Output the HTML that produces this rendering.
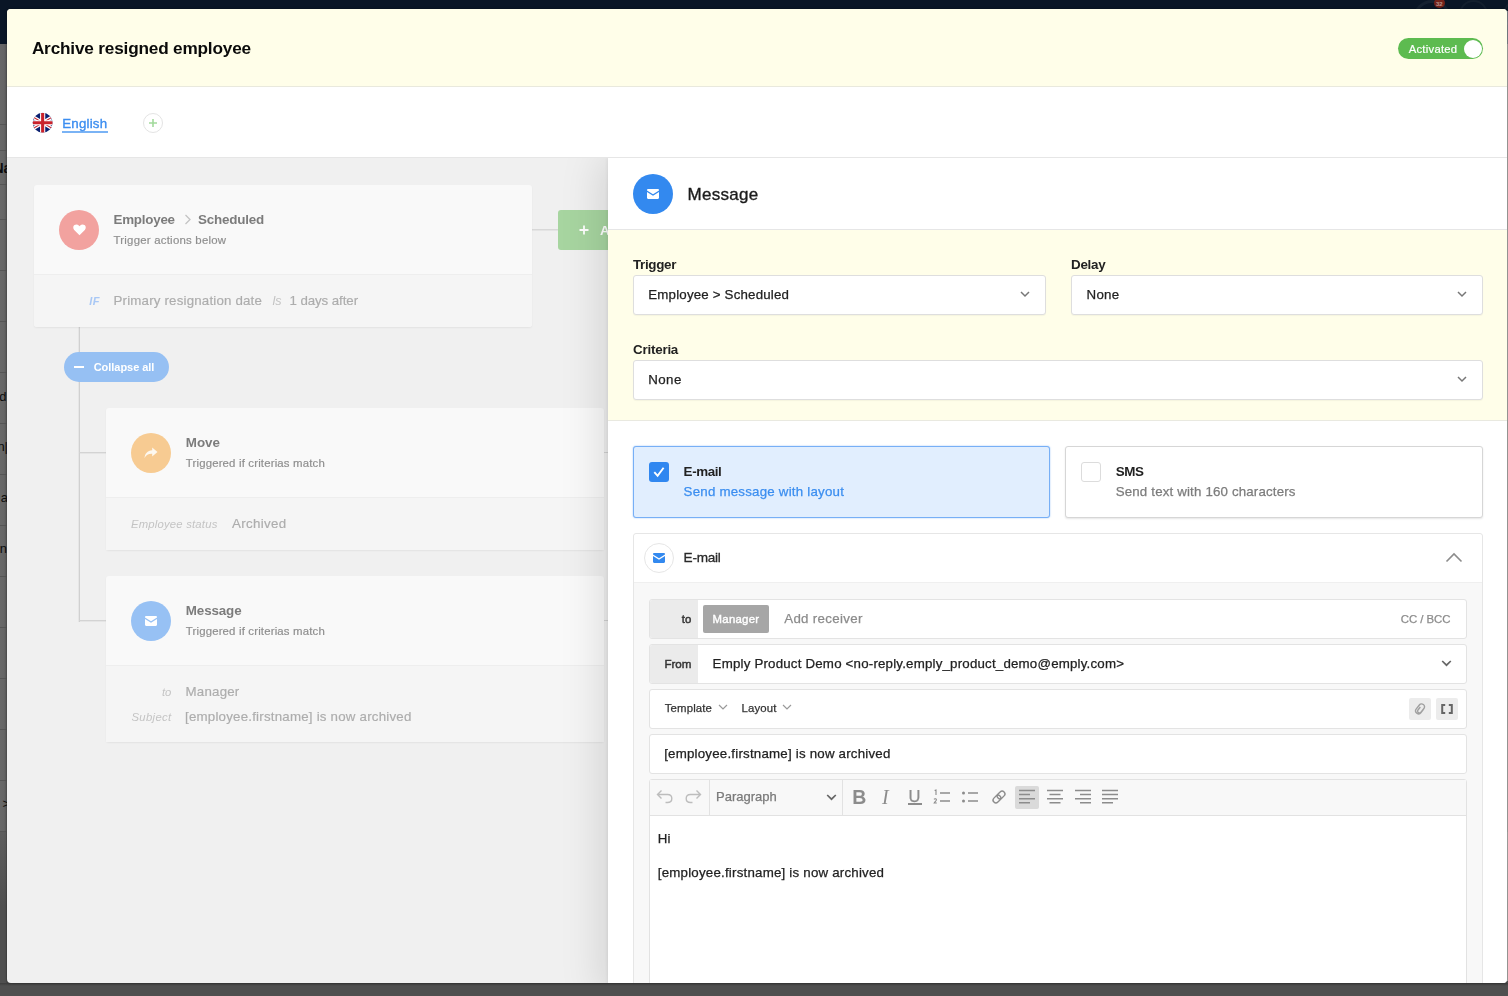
<!DOCTYPE html>
<html lang="en"><head><meta charset="utf-8"><title>Archive resigned employee</title>
<style>
html,body{margin:0;padding:0}
body{width:1508px;height:996px;overflow:hidden;position:relative;background:#4f4f4f;font-family:"Liberation Sans",sans-serif}
.a{position:absolute}
.ln{left:0;width:8px;height:1px;background:#555}
.sg{font-size:13px;line-height:16px;color:#0c0c0c;white-space:pre}
.card{background:#f9f9f9;border-radius:3px;box-shadow:0 1px 2px rgba(0,0,0,.06)}
.sel{background:#fff;border:1px solid #dedede;border-radius:3px;box-sizing:border-box;box-shadow:0 1px 1px rgba(0,0,0,.04)}
.row{background:#fff;border:1px solid #e3e3e3;border-radius:3px;box-sizing:border-box}
.t{position:absolute;white-space:pre;line-height:20px;height:20px}
</style></head><body>
<!-- backdrop -->
<div class="a" style="left:0;top:0;width:1508px;height:44px;background:#0a1626"></div>
<div class="a" style="left:0;top:44px;width:12px;height:952px;background:linear-gradient(90deg,#686868 0,#646464 5px,#545454 7px)"></div>
<div class="a" style="left:0;top:832px;width:1508px;height:164px;background:linear-gradient(180deg,#5d5d5d 0,#4f4f4f 75px)"></div>
<div class="a" style="left:6px;top:832px;width:2px;height:151px;background:linear-gradient(90deg,rgba(0,0,0,.05),rgba(0,0,0,.2))"></div>
<div class="a" style="left:0;top:983px;width:1508px;height:3px;background:linear-gradient(180deg,#3c3c3c,#4f4f4f)"></div>
<div class="a ln" style="top:124px"></div><div class="a ln" style="top:150px"></div><div class="a ln" style="top:184px"></div>
<div class="a ln" style="top:219px"></div><div class="a ln" style="top:270px"></div><div class="a ln" style="top:321px"></div>
<div class="a ln" style="top:372px"></div><div class="a ln" style="top:423px"></div><div class="a ln" style="top:474px"></div>
<div class="a ln" style="top:525px"></div><div class="a ln" style="top:576px"></div><div class="a ln" style="top:627px"></div>
<div class="a ln" style="top:678px"></div><div class="a ln" style="top:729px"></div><div class="a ln" style="top:780px"></div><div class="a ln" style="top:831px"></div>
<!-- faint nav circles -->
<div class="a" style="left:1413px;top:0;width:38px;height:38px;border-radius:50%;border:3px solid #152130;box-sizing:border-box"></div>
<div class="a" style="left:1458.5px;top:0;width:29px;height:29px;border-radius:50%;border:2px solid #131f2d;box-sizing:border-box"></div>
<div class="a" style="left:1503px;top:0;width:29px;height:29px;border-radius:50%;border:2px solid #131f2d;box-sizing:border-box"></div>
<div class="a" style="left:1434px;top:-2.5px;width:10.5px;height:10.5px;border-radius:50%;background:#74231a"></div>
<span class="a" style="left:1436px;top:0.5px;font-size:6px;line-height:7px;color:#b9958f;font-weight:bold">32</span>
<!-- page fragments at left edge -->
<span class="a sg" style="left:-6.5px;top:160px;font-weight:bold;font-size:14px">Name</span>
<span class="a sg" style="right:1501.5px;top:389px">d</span>
<span class="a sg" style="right:1500px;top:439px">n|</span>
<span class="a sg" style="right:1500px;top:490px">a</span>
<span class="a sg" style="right:1501px;top:541px">n</span>
<span class="a sg" style="right:1498px;top:796px">&gt;</span>

<!-- modal -->
<div class="a" id="modal" style="will-change:transform;left:7px;top:9px;width:1500px;height:974px;border-radius:4px;overflow:hidden;background:#f0f0f0;box-shadow:0 0 3px rgba(0,0,0,.32)">
<div class="a" style="left:-7px;top:-9px;width:1508px;height:996px">

<!-- header -->
<div class="a" style="left:7px;top:9px;width:1500px;height:78px;background:#fffee9;border-bottom:1px solid #e9e9dd;box-sizing:border-box"></div>
<div class="a" style="left:1398px;top:38px;width:85px;height:21px;border-radius:11px;background:#5dbb50"></div>
<div class="a" style="left:1463.5px;top:39.5px;width:18px;height:18px;border-radius:50%;background:#fff"></div>

<!-- lang bar -->
<div class="a" style="left:7px;top:87px;width:1500px;height:71px;background:#fff;border-bottom:1px solid #e6e6e6;box-sizing:border-box"></div>
<svg class="a" style="left:33px;top:113px;overflow:visible" width="20" height="20" viewBox="7.020 0.250 20 20">
 <defs><clipPath id="fc"><circle cx="16.670" cy="10" r="9.900"/></clipPath></defs>
 <g clip-path="url(#fc)">
  <rect x="0" y="0" width="34" height="20" fill="#0b2070"/>
  <path d="M0 0L33.340 20M33.340 0L0 20" stroke="#fff" stroke-width="3.600"/>
  <path d="M0 0L33.340 20M33.340 0L0 20" stroke="#c9222b" stroke-width="1.100"/>
  <path d="M16.670 0V20M0 10H34" stroke="#fff" stroke-width="5.200"/>
  <path d="M16.670 0V20" stroke="#c9222b" stroke-width="3.100"/>
  <path d="M0 10H34" stroke="#c9222b" stroke-width="2.800"/>
 </g>
</svg>
<div class="a" style="left:62px;top:131px;width:46px;height:2px;background:#7ab3f5"></div>
<div class="a" style="left:142.5px;top:112.8px;width:20px;height:20px;border-radius:50%;border:1px solid #e4e4e4;box-sizing:border-box;background:#fff"></div>
<svg class="a" style="left:147.5px;top:117.8px" width="10" height="10" viewBox="0 0 10 10"><path d="M5 1V9M1 5H9" stroke="#a2da9c" stroke-width="1.6"/></svg>

<!-- left flow (faded) -->
<div class="a" style="left:78px;top:327px;width:1px;height:295px;background:#e6e6e6"></div>
<div class="a" style="left:79px;top:327px;width:1px;height:295px;background:#d0d0d0"></div>
<div class="a" style="left:79px;top:452px;width:27px;height:1px;background:#d3d3d3"></div>
<div class="a" style="left:80px;top:453px;width:26px;height:1px;background:#e5e5e5"></div>
<div class="a" style="left:79px;top:620px;width:27px;height:1px;background:#d3d3d3"></div>
<div class="a" style="left:80px;top:621px;width:26px;height:1px;background:#e5e5e5"></div>
<div class="a" style="left:532px;top:229px;width:30px;height:1px;background:#d8d8d8"></div>
<div class="a" style="left:532px;top:230px;width:30px;height:1px;background:#e4e4e4"></div>

<!-- trigger card -->
<div class="a card" style="left:34px;top:185px;width:498px;height:142px"></div>
<div class="a" style="left:34px;top:274px;width:498px;height:53px;background:#f5f5f5;border-top:1px solid #eeeeee;box-sizing:border-box;border-radius:0 0 3px 3px"></div>
<div class="a" style="left:59px;top:209.5px;width:40px;height:40px;border-radius:50%;background:#f2a29f"></div>
<svg class="a" style="left:72.5px;top:223.5px" width="13" height="12" viewBox="0 0 13 12"><path d="M6.5 11.2L1.2 5.9C-0.2 4.4 0 2.1 1.5 1 2.9 0 4.7 0.3 5.8 1.5L6.5 2.2 7.2 1.5C8.3 0.3 10.1 0 11.5 1 13 2.1 13.2 4.4 11.8 5.9Z" fill="#fff"/></svg>
<svg class="a" style="left:184px;top:214px" width="8" height="11" viewBox="0 0 8 11"><path d="M1.5 1L6 5.5 1.5 10" fill="none" stroke="#c4c4c4" stroke-width="1.3"/></svg>

<!-- add button -->
<div class="a" style="left:558px;top:210px;width:110px;height:40px;border-radius:3px;background:#a7d5a0"></div>
<svg class="a" style="left:578.5px;top:224.5px" width="10" height="10" viewBox="0 0 10 10"><path d="M5 0.5V9.5M0.5 5H9.5" stroke="#fff" stroke-width="1.8"/></svg>

<div class="a" style="left:604px;top:452px;width:6px;height:1px;background:#d2d2d2"></div>
<div class="a" style="left:604px;top:620px;width:6px;height:1px;background:#d2d2d2"></div>
<!-- collapse -->
<div class="a" style="left:64px;top:352px;width:105px;height:30px;border-radius:15px;background:#96c0f3"></div>
<div class="a" style="left:74px;top:366px;width:10px;height:2px;background:#fff"></div>

<!-- move card -->
<div class="a card" style="left:106px;top:408px;width:498px;height:142px"></div>
<div class="a" style="left:106px;top:497px;width:498px;height:53px;background:#f5f5f5;border-top:1px solid #eeeeee;box-sizing:border-box"></div>
<div class="a" style="left:131px;top:433px;width:40px;height:40px;border-radius:50%;background:#f7cb92"></div>
<svg class="a" style="left:144px;top:447px" width="14" height="12" viewBox="0 0 14 12"><path d="M8.2 0.5L13.5 5 8.2 9.5V6.8C4.6 6.6 2.3 7.8 0.6 11 0.8 6.6 3.4 3.6 8.2 3.2Z" fill="#fdf8ef"/></svg>

<!-- message card -->
<div class="a card" style="left:106px;top:576px;width:498px;height:166px"></div>
<div class="a" style="left:106px;top:665px;width:498px;height:77px;background:#f5f5f5;border-top:1px solid #eeeeee;box-sizing:border-box"></div>
<div class="a" style="left:131px;top:601px;width:40px;height:40px;border-radius:50%;background:#97c1f4"></div>
<svg class="a" style="left:145px;top:616px" width="12" height="10" viewBox="0 0 12 10"><path d="M1.2 0H10.8C11.5 0 12 0.5 12 1.2V1.6L6 5.2 0 1.6V1.2C0 0.5 0.5 0 1.2 0ZM0 3.1L6 6.7 12 3.1V8.8C12 9.5 11.5 10 10.8 10H1.2C0.5 10 0 9.5 0 8.8Z" fill="#fff"/></svg>

<!-- left texts -->
<span class="t" style="left:31.90px;top:38.01px;font-size:17.2px;color:#0a0a0a;font-weight:bold;letter-spacing:-0.181px">Archive resigned employee</span>
<span class="t" style="left:1408.70px;top:39.01px;font-size:11.3px;color:#fff;-webkit-text-stroke:0.18px #fff;letter-spacing:0.248px">Activated</span>
<span class="t" style="left:62.30px;top:113.61px;font-size:13.3px;color:#3b8df0;-webkit-text-stroke:0.35px #3b8df0;letter-spacing:0.196px">English</span>
<span class="t" style="left:113.50px;top:210.00px;font-size:13.4px;color:#7c7c7c;font-weight:bold;letter-spacing:-0.246px">Employee</span>
<span class="t" style="left:198.00px;top:210.00px;font-size:13.4px;color:#7c7c7c;font-weight:bold;letter-spacing:-0.191px">Scheduled</span>
<span class="t" style="left:113.50px;top:230.00px;font-size:11.4px;color:#8e8e8e;-webkit-text-stroke:0.18px #8e8e8e;letter-spacing:0.236px">Trigger actions below</span>
<span class="t" style="left:89.20px;top:290.50px;font-size:11px;color:#a9c8f5;font-weight:bold;font-style:italic;letter-spacing:0.509px">IF</span>
<span class="t" style="left:113.50px;top:291.02px;font-size:13.3px;color:#adadad;-webkit-text-stroke:0.18px #adadad;letter-spacing:0.186px">Primary resignation date</span>
<span class="t" style="left:272.20px;top:291.01px;font-size:12.5px;color:#c4c4c4;font-style:italic;letter-spacing:-0.367px">Is</span>
<span class="t" style="left:289.50px;top:291.02px;font-size:13.3px;color:#adadad;-webkit-text-stroke:0.18px #adadad;letter-spacing:-0.082px">1 days after</span>
<span class="t" style="left:600.00px;top:221.00px;font-size:13.4px;color:#fff;font-weight:bold;letter-spacing:0.081px">Add action</span>
<span class="t" style="left:93.70px;top:357.41px;font-size:11px;color:#fff;font-weight:bold;letter-spacing:-0.037px">Collapse all</span>
<span class="t" style="left:185.80px;top:433.41px;font-size:13.4px;color:#7c7c7c;font-weight:bold;letter-spacing:-0.009px">Move</span>
<span class="t" style="left:185.80px;top:453.31px;font-size:11.4px;color:#8e8e8e;-webkit-text-stroke:0.18px #8e8e8e;letter-spacing:0.167px">Triggered if criterias match</span>
<span class="t" style="left:131.00px;top:513.51px;font-size:11.3px;color:#c4c4c4;font-style:italic;letter-spacing:0.199px">Employee status</span>
<span class="t" style="left:232.00px;top:514.02px;font-size:13.3px;color:#adadad;-webkit-text-stroke:0.18px #adadad;letter-spacing:0.346px">Archived</span>
<span class="t" style="left:185.80px;top:601.41px;font-size:13.4px;color:#7c7c7c;font-weight:bold;letter-spacing:-0.125px">Message</span>
<span class="t" style="left:185.80px;top:621.00px;font-size:11.4px;color:#8e8e8e;-webkit-text-stroke:0.18px #8e8e8e;letter-spacing:0.167px">Triggered if criterias match</span>
<span class="t" style="right:1336.70px;top:682.01px;font-size:11.3px;color:#c4c4c4;font-style:italic">to</span>
<span class="t" style="left:185.50px;top:682.02px;font-size:13.3px;color:#adadad;-webkit-text-stroke:0.18px #adadad;letter-spacing:0.217px">Manager</span>
<span class="t" style="left:131.50px;top:707.01px;font-size:11.3px;color:#c4c4c4;font-style:italic;letter-spacing:0.330px">Subject</span>
<span class="t" style="left:185.00px;top:707.02px;font-size:13.3px;color:#adadad;-webkit-text-stroke:0.18px #adadad;letter-spacing:0.215px">[employee.firstname] is now archived</span>
<!-- right panel -->
<div class="a" style="left:0;top:158px;width:1508px;height:838px;overflow:hidden"><div class="a" style="left:608px;top:0;width:900px;height:838px;background:#fff;box-shadow:-6px 0 40px rgba(0,0,0,.13),-1px 0 3px rgba(0,0,0,.06)"></div></div>
<div class="a" style="left:608px;top:229px;width:900px;height:1px;background:#e6e6e6"></div>
<div class="a" style="left:633px;top:174px;width:40px;height:40px;border-radius:50%;background:#3389ef"></div>
<svg class="a" style="left:647px;top:189px" width="12" height="10" viewBox="0 0 12 10"><path d="M1.2 0H10.8C11.5 0 12 0.5 12 1.2V1.6L6 5.2 0 1.6V1.2C0 0.5 0.5 0 1.2 0ZM0 3.1L6 6.7 12 3.1V8.8C12 9.5 11.5 10 10.8 10H1.2C0.5 10 0 9.5 0 8.8Z" fill="#fff"/></svg>

<!-- yellow settings -->
<div class="a" style="left:608px;top:230px;width:900px;height:191px;background:#fffee9;border-bottom:1px solid #e9e9e0;box-sizing:border-box"></div>
<div class="a sel" style="left:633px;top:275px;width:413px;height:40px"></div>
<div class="a sel" style="left:1071px;top:275px;width:412px;height:40px"></div>
<div class="a sel" style="left:633px;top:360px;width:850px;height:40px"></div>
<svg class="a" style="left:1020px;top:291px" width="10" height="7" viewBox="0 0 10 7"><path d="M1 1L5 5 9 1" fill="none" stroke="#777" stroke-width="1.5"/></svg>
<svg class="a" style="left:1457px;top:291px" width="10" height="7" viewBox="0 0 10 7"><path d="M1 1L5 5 9 1" fill="none" stroke="#777" stroke-width="1.5"/></svg>
<svg class="a" style="left:1457px;top:376px" width="10" height="7" viewBox="0 0 10 7"><path d="M1 1L5 5 9 1" fill="none" stroke="#777" stroke-width="1.5"/></svg>

<!-- channel boxes -->
<div class="a" style="left:633px;top:446px;width:417px;height:72px;border:1px solid #77aff6;border-radius:3px;background:#e1eefe;box-sizing:border-box;box-shadow:0 0 1.500px rgba(60,140,240,.65)"></div>
<div class="a" style="left:649px;top:462px;width:20px;height:20px;border-radius:3px;background:#3087f0"></div>
<svg class="a" style="left:653px;top:466px" width="12" height="12" viewBox="0 0 12 12"><path d="M1.3 6.2L4.6 9.8 10.6 1.8" fill="none" stroke="#fff" stroke-width="1.9"/></svg>
<div class="a" style="left:1065px;top:446px;width:418px;height:72px;border:1px solid #d6d6d6;border-radius:3px;background:#fff;box-sizing:border-box;box-shadow:0 1px 2px rgba(0,0,0,.1)"></div>
<div class="a" style="left:1081px;top:462px;width:20px;height:20px;border-radius:3px;border:1px solid #dcdcdc;background:#fff;box-sizing:border-box"></div>

<!-- accordion -->
<div class="a" style="left:633px;top:533px;width:850px;height:470px;border:1px solid #e6e6e6;border-radius:3px;background:#f8f8f8;box-sizing:border-box"></div>
<div class="a" style="left:634px;top:534px;width:848px;height:49px;background:#fff;border-bottom:1px solid #efefef;box-sizing:border-box;border-radius:3px 3px 0 0"></div>
<div class="a" style="left:644px;top:543px;width:30px;height:30px;border-radius:50%;border:1px solid #e6e6e6;background:#fff;box-sizing:border-box"></div>
<svg class="a" style="left:653px;top:553px" width="12" height="10" viewBox="0 0 12 10"><path d="M1.2 0H10.8C11.5 0 12 0.5 12 1.2V1.6L6 5.2 0 1.6V1.2C0 0.5 0.5 0 1.2 0ZM0 3.1L6 6.7 12 3.1V8.8C12 9.5 11.5 10 10.8 10H1.2C0.5 10 0 9.5 0 8.8Z" fill="#3389ef"/></svg>
<svg class="a" style="left:1445px;top:552px" width="18" height="11" viewBox="0 0 18 11"><path d="M1.5 9.5L9 2 16.5 9.5" fill="none" stroke="#8c8c8c" stroke-width="1.6"/></svg>

<!-- to row -->
<div class="a row" style="left:649px;top:599px;width:818px;height:40px"></div>
<div class="a" style="left:650px;top:600px;width:48px;height:38px;background:#ebebeb;border-radius:2px 0 0 2px"></div>
<div class="a" style="left:703px;top:605px;width:66px;height:28px;border-radius:2px;background:#a6a6a6"></div>

<!-- from row -->
<div class="a row" style="left:649px;top:644px;width:818px;height:40px"></div>
<div class="a" style="left:650px;top:645px;width:48px;height:38px;background:#ebebeb;border-radius:2px 0 0 2px"></div>
<svg class="a" style="left:1441px;top:660px" width="11" height="7" viewBox="0 0 11 7"><path d="M1.2 1L5.5 5.2 9.8 1" fill="none" stroke="#666" stroke-width="1.7"/></svg>

<!-- template row -->
<div class="a row" style="left:649px;top:689px;width:818px;height:40px"></div>
<svg class="a" style="left:718px;top:704px" width="10" height="7" viewBox="0 0 10 7"><path d="M1 1L5 5 9 1" fill="none" stroke="#9a9a9a" stroke-width="1.2"/></svg>
<svg class="a" style="left:782px;top:704px" width="10" height="7" viewBox="0 0 10 7"><path d="M1 1L5 5 9 1" fill="none" stroke="#9a9a9a" stroke-width="1.2"/></svg>
<div class="a" style="left:1409px;top:698px;width:22px;height:22px;border-radius:2px;background:#ececec"></div>
<div class="a" style="left:1436px;top:698px;width:22px;height:22px;border-radius:2px;background:#ececec"></div>
<svg class="a" style="left:1414px;top:703px" width="12" height="12" viewBox="0 0 12 12"><g fill="none" stroke="#a0a0a0" stroke-width="1.4" transform="rotate(38 6 6)"><path d="M9 4.500V8.200C9 12.200 3 12.200 3 8.200V3.200C3 -0.500 8.800 -0.500 8.800 3.200V8C8.800 10.400 5 10.400 5 8V4.200"/></g></svg>
<svg class="a" style="left:1441px;top:704px" width="12" height="10" viewBox="0 0 12 10"><path d="M4.200 1H1.200V9H4.200M7.800 1H10.800V9H7.800" fill="none" stroke="#666" stroke-width="2"/></svg>

<!-- subject row -->
<div class="a row" style="left:649px;top:734px;width:818px;height:40px"></div>

<!-- editor -->
<div class="a" style="left:649px;top:779px;width:818px;height:230px;border:1px solid #e2e2e2;border-radius:3px 3px 0 0;background:#fff;box-sizing:border-box"></div>
<div class="a" style="left:650px;top:780px;width:816px;height:36px;background:#f8f8f8;border-bottom:1px solid #e2e2e2;box-sizing:border-box"></div>
<div class="a" style="left:709px;top:780px;width:1px;height:35px;background:#e2e2e2"></div>
<div class="a" style="left:842px;top:780px;width:1px;height:35px;background:#e2e2e2"></div>
<div class="a" style="left:1015px;top:785.5px;width:24px;height:23px;border-radius:2px;background:#dadada"></div>
<!-- undo / redo -->
<svg class="a" style="left:656px;top:789px" width="18" height="16" viewBox="0 0 18 16"><path d="M5.5 1.5L1.5 5.5 5.5 9.5M1.8 5.5H11.5C14 5.5 15.8 7.2 15.8 9.5 15.8 11.8 14 13.5 11.5 13.5H9.5" fill="none" stroke="#bdbdbd" stroke-width="1.4"/></svg>
<svg class="a" style="left:684px;top:789px" width="18" height="16" viewBox="0 0 18 16"><path d="M12.5 1.5L16.5 5.5 12.5 9.5M16.2 5.5H6.5C4 5.5 2.2 7.2 2.2 9.5 2.2 11.8 4 13.5 6.500 13.5H8.5" fill="none" stroke="#bdbdbd" stroke-width="1.4"/></svg>
<svg class="a" style="left:826px;top:794px" width="11" height="7" viewBox="0 0 11 7"><path d="M1.2 1L5.5 5.2 9.8 1" fill="none" stroke="#666" stroke-width="1.7"/></svg>
<!-- U underline bar -->
<div class="a" style="left:908px;top:803.4px;width:14px;height:1.5px;background:#8c8c8c"></div>
<!-- ordered list -->
<svg class="a" style="left:933px;top:788px" width="18" height="18" viewBox="0 0 18 18"><path d="M7 5H17M7 13H17" stroke="#8c8c8c" stroke-width="1.5"/><path d="M1.6 2.6L3 2V7M1 11.3C1.6 10.5 3.6 10.6 3.4 12 3.3 12.8 1.8 14 1.2 15H3.8" fill="none" stroke="#8c8c8c" stroke-width="1.1"/></svg>
<!-- bullet list -->
<svg class="a" style="left:961px;top:788px" width="18" height="18" viewBox="0 0 18 18"><path d="M7 5H17M7 13H17" stroke="#8c8c8c" stroke-width="1.5"/><circle cx="2.5" cy="5" r="1.5" fill="#8c8c8c"/><circle cx="2.5" cy="13" r="1.5" fill="#8c8c8c"/></svg>
<!-- link -->
<svg class="a" style="left:990px;top:788px" width="18" height="18" viewBox="0 0 18 18"><g fill="none" stroke="#8c8c8c" stroke-width="1.35" transform="rotate(-45 9 9)"><rect x="1.8" y="6.2" width="8.6" height="5.6" rx="2.8"/><rect x="7.6" y="6.2" width="8.6" height="5.6" rx="2.8"/></g></svg>
<!-- aligns -->
<svg class="a" style="left:1018px;top:789px" width="18" height="16" viewBox="0 0 18 16"><path d="M1 1.500H17M1 5.600H12M1 9.700H17M1 13.800H12" stroke="#8c8c8c" stroke-width="1.5"/></svg>
<svg class="a" style="left:1046px;top:789px" width="18" height="16" viewBox="0 0 18 16"><path d="M1 1.5H17M3.500 5.6H14.5M1 9.7H17M3.5 13.8H14.5" stroke="#8c8c8c" stroke-width="1.5"/></svg>
<svg class="a" style="left:1073.5px;top:789px" width="18" height="16" viewBox="0 0 18 16"><path d="M1 1.5H17M6 5.6H17M1 9.700H17M6 13.8H17" stroke="#8c8c8c" stroke-width="1.5"/></svg>
<svg class="a" style="left:1101px;top:789px" width="18" height="16" viewBox="0 0 18 16"><path d="M1 1.5H17M1 5.6H17M1 9.7H17M1 13.8H12" stroke="#8c8c8c" stroke-width="1.5"/></svg>


<!-- right texts -->
<span class="t" style="left:687.50px;top:184.71px;font-size:17px;color:#1c1c1c;-webkit-text-stroke:0.35px #1c1c1c;letter-spacing:0.288px">Message</span>
<span class="t" style="left:633.00px;top:254.80px;font-size:13.4px;color:#222;font-weight:bold;letter-spacing:-0.342px">Trigger</span>
<span class="t" style="left:1071.00px;top:254.80px;font-size:13.4px;color:#222;font-weight:bold;letter-spacing:-0.247px">Delay</span>
<span class="t" style="left:648.30px;top:285.21px;font-size:13.3px;color:#222;-webkit-text-stroke:0.25px #222;letter-spacing:0.184px">Employee &gt; Scheduled</span>
<span class="t" style="left:1086.50px;top:285.21px;font-size:13.3px;color:#222;-webkit-text-stroke:0.25px #222;letter-spacing:0.301px">None</span>
<span class="t" style="left:633.00px;top:339.80px;font-size:13.4px;color:#222;font-weight:bold;letter-spacing:-0.224px">Criteria</span>
<span class="t" style="left:648.30px;top:369.71px;font-size:13.3px;color:#222;-webkit-text-stroke:0.25px #222;letter-spacing:0.401px">None</span>
<span class="t" style="left:683.60px;top:462.30px;font-size:13.4px;color:#222;font-weight:bold;letter-spacing:-0.398px">E-mail</span>
<span class="t" style="left:683.60px;top:482.21px;font-size:13.3px;color:#3b8ef0;-webkit-text-stroke:0.25px #3b8ef0;letter-spacing:0.219px">Send message with layout</span>
<span class="t" style="left:1115.70px;top:462.30px;font-size:13.4px;color:#222;font-weight:bold;letter-spacing:-0.410px">SMS</span>
<span class="t" style="left:1115.70px;top:482.21px;font-size:13.3px;color:#7c7c7c;-webkit-text-stroke:0.25px #7c7c7c;letter-spacing:0.166px">Send text with 160 characters</span>
<span class="t" style="left:683.60px;top:547.81px;font-size:13.6px;color:#2a2a2a;-webkit-text-stroke:0.3px #2a2a2a;letter-spacing:-0.255px">E-mail</span>
<span class="t" style="right:816.70px;top:608.81px;font-size:11.4px;color:#333;-webkit-text-stroke:0.45px #333">to</span>
<span class="t" style="left:712.60px;top:608.81px;font-size:11.4px;color:#fff;-webkit-text-stroke:0.4px #fff;letter-spacing:0.247px">Manager</span>
<span class="t" style="left:784.20px;top:608.80px;font-size:13.3px;color:#8c8c8c;-webkit-text-stroke:0.25px #8c8c8c;letter-spacing:0.320px">Add receiver</span>
<span class="t" style="left:1400.70px;top:608.61px;font-size:11.4px;color:#8c8c8c;-webkit-text-stroke:0.25px #8c8c8c;letter-spacing:-0.037px">CC / BCC</span>
<span class="t" style="left:664.40px;top:653.51px;font-size:11.6px;color:#333;-webkit-text-stroke:0.45px #333;letter-spacing:0.009px">From</span>
<span class="t" style="left:712.60px;top:653.52px;font-size:13.3px;color:#222;-webkit-text-stroke:0.25px #222;letter-spacing:0.195px">Emply Product Demo &lt;no-reply.emply_product_demo@emply.com&gt;</span>
<span class="t" style="left:664.80px;top:697.70px;font-size:11.4px;color:#333;-webkit-text-stroke:0.25px #333;letter-spacing:0.123px">Template</span>
<span class="t" style="left:741.40px;top:697.70px;font-size:11.4px;color:#333;-webkit-text-stroke:0.25px #333;letter-spacing:0.166px">Layout</span>
<span class="t" style="left:664.20px;top:743.80px;font-size:13.3px;color:#222;-webkit-text-stroke:0.25px #222;letter-spacing:0.212px">[employee.firstname] is now archived</span>
<span class="t" style="left:716.10px;top:787.21px;font-size:13px;color:#7a7a7a;-webkit-text-stroke:0.25px #7a7a7a;letter-spacing:-0.024px">Paragraph</span>
<span class="t" style="left:852.20px;top:787.01px;font-size:19.5px;color:#8c8c8c;font-weight:bold">B</span>
<span class="t" style="left:882.00px;top:787.01px;font-size:20px;color:#8c8c8c;font-style:italic;font-family:'Liberation Serif',serif">I</span>
<span class="t" style="left:908.60px;top:786.02px;font-size:16.5px;color:#8c8c8c;-webkit-text-stroke:0.25px #8c8c8c">U</span>
<span class="t" style="left:657.80px;top:829.02px;font-size:13.3px;color:#222;-webkit-text-stroke:0.25px #222;letter-spacing:0.219px">Hi</span>
<span class="t" style="left:657.80px;top:863.02px;font-size:13.3px;color:#222;-webkit-text-stroke:0.25px #222;letter-spacing:0.212px">[employee.firstname] is now archived</span>
</div></div><!-- /modal -->
<div class="a" style="left:1507px;top:11px;width:1px;height:970px;background:rgba(255,255,250,.42)"></div>
</body></html>
